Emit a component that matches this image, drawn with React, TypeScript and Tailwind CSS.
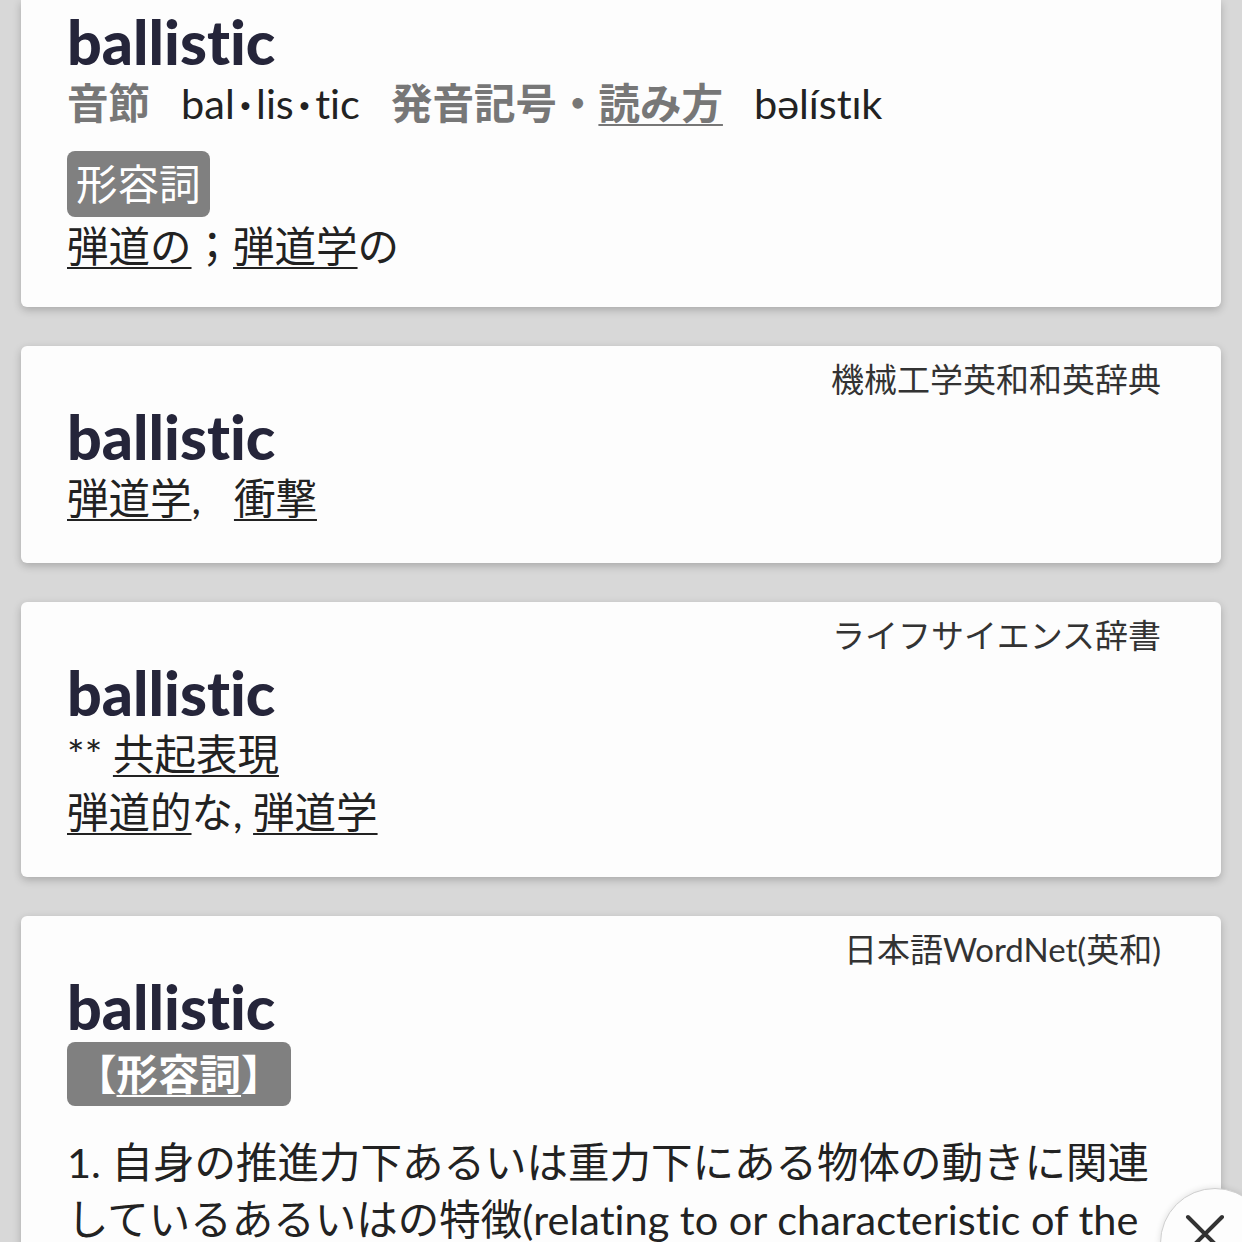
import React from "react";

const latin = "font-['Lato','Noto_Sans_CJK_JP',sans-serif]";

function Link({ children }: { children: React.ReactNode }) {
  return (
    <span className="underline decoration-[2px] underline-offset-[5px]">
      {children}
    </span>
  );
}

function Card({
  source,
  children,
  first,
}: {
  source?: string;
  children: React.ReactNode;
  first?: boolean;
}) {
  return (
    <div
      className={
        "bg-[#fdfdfd] shadow-[0_3px_8px_rgba(0,0,0,0.22)] pl-[46px] pr-[60px] " +
        (first ? "rounded-b-[6px] pt-[10px] pb-[32px]" : "rounded-[6px] pt-[13px] pb-[36px]")
      }
    >
      {source && (
        <div className="text-right text-[33px] leading-[40px] text-[#333] mb-[6px]">
          {source}
        </div>
      )}
      {children}
    </div>
  );
}

function Title() {
  return (
    <h2 className="font-['Lato',sans-serif] font-black text-[61px] leading-[64px] text-[#25253a] [font-variant-ligatures:none]">
      ballistic
    </h2>
  );
}

export default function App() {
  return (
    <div
      className={
        "relative h-screen overflow-hidden bg-[#d8d8d8] px-[21px] text-[41.5px] leading-[58px] text-[#222] [font-variant-ligatures:none] " +
        latin
      }
    >
      <div className="flex flex-col gap-[39px]">
        <Card first>
          <Title />
          <div className="flex items-center whitespace-nowrap">
            <span className="font-semibold text-[#777] mr-[31px]">音節</span>
            <span className="mr-[31px]">
              bal<span className="mx-[5px] font-bold">·</span>lis
              <span className="mx-[5px] font-bold">·</span>tic
            </span>
            <span className="font-semibold text-[#777]">発音記号・</span>
            <span className="font-semibold text-[#777] underline decoration-[2px] underline-offset-[5px] mr-[31px]">
              読み方
            </span>
            <span>bəlístɪk</span>
          </div>
          <div className="mt-[19px] w-fit rounded-[8px] bg-[#808080] px-[9px] py-[4px] text-white">
            形容詞
          </div>
          <div>
            <Link>弾道の</Link>；<Link>弾道学</Link>の
          </div>
        </Card>

        <Card source="機械工学英和和英辞典">
          <Title />
          <div>
            <Link>弾道学</Link>
            <span className="mr-[33px]">,</span>
            <Link>衝撃</Link>
          </div>
        </Card>

        <Card source="ライフサイエンス辞書">
          <Title />
          <div>
            ** <Link>共起表現</Link>
          </div>
          <div>
            <Link>弾道的</Link>な, <Link>弾道学</Link>
          </div>
        </Card>

        <Card source="日本語WordNet(英和)">
          <Title />
          <div className="mt-[3px] w-fit rounded-[8px] bg-[#808080] px-[8px] py-[3px] font-bold text-white">
            【<span className="underline decoration-[2px] underline-offset-[5px]">形容詞</span>】
          </div>
          <p className="mt-[28px] leading-[57px]">
            1. 自身の推進力下あるいは重力下にある物体の動きに関連しているあるいはの特徴(relating to or
            characteristic of the motion of objects moving under their own momentum and the force of
            gravity)
          </p>
          <p className="leading-[57px]">ballistic missile 弾道ミサイル</p>
        </Card>
      </div>

      {/* floating close button */}
      <button className="absolute right-[-28px] bottom-[-56px] flex h-[110px] w-[110px] items-start justify-start rounded-full border border-[#cfcfcf] bg-[#fdfdfd] pl-[24px] pt-[25px] shadow-[0_0_6px_rgba(0,0,0,0.12)]">
        <svg width="40" height="40" viewBox="0 0 40 40" fill="none">
          <path
            d="M3 3 L37 37 M37 3 L3 37"
            stroke="#333"
            strokeWidth="4"
            strokeLinecap="round"
          />
        </svg>
      </button>
    </div>
  );
}
